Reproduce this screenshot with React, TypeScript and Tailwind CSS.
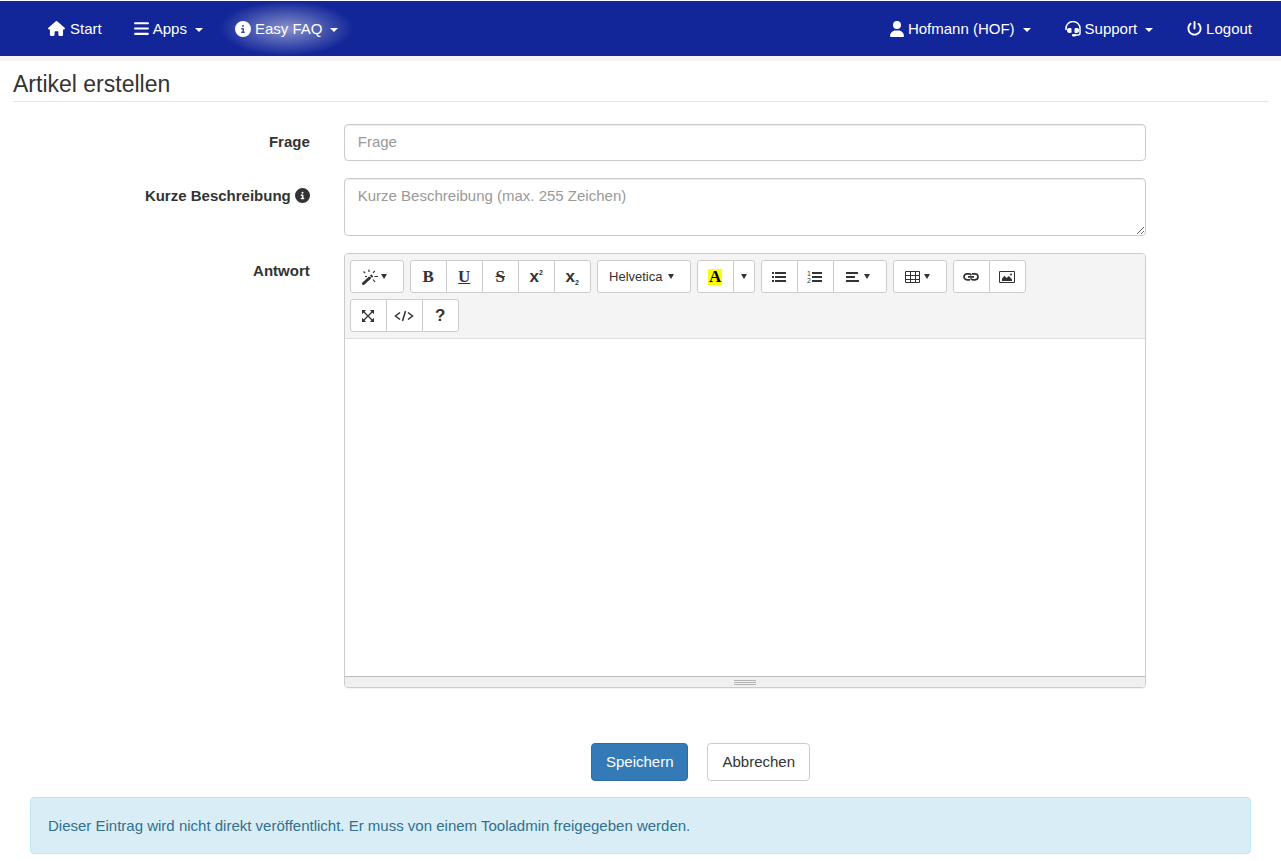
import React from 'react';
import type { ReactNode } from 'react';
import clsx from 'clsx';
import { FaBars, FaCircleInfo, FaHouse, FaPowerOff, FaUser } from 'react-icons/fa6';

const navItem = 'flex h-full items-center text-white';

const NavCaret = () => (
  <svg className="ml-2 mt-[2px] h-1 w-2" viewBox="0 0 8 4" fill="currentColor" aria-hidden="true">
    <path d="M0 0h8L4 4z" />
  </svg>
);

const ToolCaret = () => (
  <svg className="h-[5px] w-[6px]" viewBox="0 0 6 5" fill="currentColor" aria-hidden="true">
    <path d="M0 0h6L3 5z" />
  </svg>
);

const Icon = ({ children }: { children: ReactNode }) => (
  <svg className="h-4 w-4 shrink-0" viewBox="0 0 16 16" fill="none" stroke="currentColor" aria-hidden="true">
    {children}
  </svg>
);

const SupportIcon = () => (
  <svg className="mr-1 h-4 w-4 shrink-0" viewBox="0 0 16 16" fill="none" stroke="currentColor" aria-hidden="true">
    <path d="M1 9V7.500a7 7 0 0 1 14 0V12a2 2 0 0 1-2 2H9.500" strokeWidth="1.500" />
    <path d="M4 7h1.500a1 1 0 0 1 1 1v3a1 1 0 0 1-1 1H5a2.500 2.500 0 0 1-1-5zM12 7h-1.500a1 1 0 0 0-1 1v3a1 1 0 0 0 1 1h.5a2.500 2.500 0 0 0 1-5z" fill="currentColor" stroke="none" />
    <rect x="7" y="13" width="4" height="2.500" rx="1.200" fill="currentColor" stroke="none" />
  </svg>
);

const MagicIcon = () => (
  <Icon>
    <path d="M1.500 14.500 7.500 9" strokeWidth="3" strokeLinecap="round" />
    <path d="M9 7.600 10.300 6.400" strokeWidth="3" />
    <path d="M1.500 2.500 3.200 4.200M7 .5v2.500M12.800 2 11 3.800M12.500 7.500h3.500M11 10.500l2 2.500M3 7.500h2" strokeWidth="1.200" />
  </Icon>
);

const BulletListIcon = () => (
  <Icon>
    <path d="M1 4h2M1 8h2M1 12h2" strokeWidth="2" />
    <path d="M4 4h11M4 8h11M4 12h11" strokeWidth="2" />
  </Icon>
);

const NumberListIcon = () => (
  <Icon>
    <path d="M5 4h10M5 8h10M5 12h10" strokeWidth="2" />
    <g fill="currentColor" stroke="none" fontSize="7" fontFamily="Liberation Sans, sans-serif">
      <text x="0" y="7">1</text>
      <text x="0" y="14">2</text>
    </g>
  </Icon>
);

const AlignIcon = () => (
  <Icon>
    <path d="M1 4h12M1 8h9M1 12h13" strokeWidth="2" />
  </Icon>
);

const TableIcon = () => (
  <Icon>
    <path d="M.5 2.500h14v11H.5zM.5 6.500h14M.5 10.500h14M5.500 2.500v11M10.500 2.500v11" />
  </Icon>
);

const LinkIcon = () => (
  <Icon>
    <path
      d="M7 10.800H4a3 3 0 0 1 0-6h2c1.300 0 2 .6 2.200 1.500M9 4.800h3a3 3 0 0 1 0 6h-2c-1.300 0-2-.6-2.200-1.500M5 7.800h6"
      strokeWidth="1.700"
    />
  </Icon>
);

const PictureIcon = () => (
  <Icon>
    <path d="M.5 2.500h15v11H.5z" />
    <path d="M3 12V9.500l2.500-2.800 2 2.300L10 7l3 3.500V12z" fill="currentColor" stroke="none" />
    <circle cx="12" cy="5.500" r="1" fill="currentColor" stroke="none" />
  </Icon>
);

const FullscreenIcon = () => (
  <Icon>
    <path d="M3.500 3.500l9 9M12.500 3.500l-9 9" strokeWidth="1.300" />
    <path d="M2 2h4.200L2 6.200zM14 2H9.800L14 6.200zM2 14h4.200L2 9.800zM14 14H9.800L14 9.800z" fill="currentColor" stroke="none" />
  </Icon>
);

const CodeIcon = () => (
  <svg className="h-4 w-5" viewBox="0 0 20 16" fill="none" stroke="currentColor" strokeWidth="1.500" aria-hidden="true">
    <path d="M6 4.500 1.500 8 6 11.500M14 4.500 18.500 8 14 11.500M11.500 3l-3 10" />
  </svg>
);

interface ToolButtonProps {
  label: string;
  className?: string;
  children: ReactNode;
}

const ToolButton = ({ label, className = 'w-[37px]', children }: ToolButtonProps) => (
  <button
    type="button"
    aria-label={label}
    className={clsx(
      'flex h-[33px] items-center justify-center border border-[#ccc] bg-white text-[#333] -ml-px first:ml-0 first:rounded-l-[3px] last:rounded-r-[3px] hover:bg-gray-100',
      className,
    )}
  >
    {children}
  </button>
);

const ToolGroup = ({ children }: { children: ReactNode }) => <div className="flex">{children}</div>;

const Navbar = () => (
  <nav className="mt-px flex h-[60px] justify-between border-b-[5px] border-[#f4f4f4] bg-[#122599] px-[29px]">
    <div className="flex pl-[3px]">
      <a href="#start" className={clsx(navItem, 'px-4')}>
        <FaHouse className="mr-[5px] h-[15px] w-[17px]" />
        Start
      </a>
      <button type="button" className={clsx(navItem, 'px-4')}>
        <FaBars className="mr-1 h-[17px] w-[15px]" />
        Apps
        <NavCaret />
      </button>
      <button
        type="button"
        className={clsx(
          navItem,
          'bg-[radial-gradient(closest-side,rgba(255,255,255,0.5),rgba(255,255,255,0.25)_50%,transparent)] px-4',
        )}
      >
        <FaCircleInfo className="mr-1 h-4 w-4" />
        Easy FAQ
        <NavCaret />
      </button>
    </div>
    <div className="flex gap-[34px]">
      <button type="button" className={navItem}>
        <FaUser className="mr-1 h-4 w-[14px]" />
        Hofmann (HOF)
        <NavCaret />
      </button>
      <button type="button" className={navItem}>
        <SupportIcon />
        Support
        <NavCaret />
      </button>
      <a href="#logout" className={navItem}>
        <FaPowerOff className="mr-1 h-[15px] w-[15px]" />
        Logout
      </a>
    </div>
  </nav>
);

const Toolbar = () => (
  <div className="flex flex-wrap gap-[6px] rounded-t-[3px] border-b border-[#ddd] bg-[#f4f4f4] py-[6px] pr-3 pl-[5px]">
    <ToolGroup>
      <ToolButton label="Stil" className="w-[54px] gap-[3px] pr-1">
        <MagicIcon />
        <ToolCaret />
      </ToolButton>
    </ToolGroup>
    <ToolGroup>
      <ToolButton label="Fett">
        <span className="font-['Liberation_Serif',serif] text-[17px] font-bold">B</span>
      </ToolButton>
      <ToolButton label="Unterstrichen">
        <span className="font-['Liberation_Serif',serif] text-[17px] font-bold underline">U</span>
      </ToolButton>
      <ToolButton label="Durchgestrichen">
        <span className="font-['Liberation_Serif',serif] text-[17px] font-bold line-through">S</span>
      </ToolButton>
      <ToolButton label="Hochgestellt">
        <span className="text-[17px] font-bold">x</span>
        <span className="mb-2 text-[7px] font-bold">2</span>
      </ToolButton>
      <ToolButton label="Tiefgestellt">
        <span className="text-[17px] font-bold">x</span>
        <span className="mt-3 text-[7px] font-bold">2</span>
      </ToolButton>
    </ToolGroup>
    <ToolGroup>
      <ToolButton label="Schriftart" className="w-[94px] gap-[6px] pr-1 text-[13px]">
        Helvetica
        <ToolCaret />
      </ToolButton>
    </ToolGroup>
    <ToolGroup>
      <ToolButton label="Textfarbe">
        <span className="w-[14px] bg-[#ff0] font-['Liberation_Serif',serif] text-[17px] leading-4 font-bold text-black">A</span>
      </ToolButton>
      <ToolButton label="Weitere Farben" className="w-[22px]">
        <ToolCaret />
      </ToolButton>
    </ToolGroup>
    <ToolGroup>
      <ToolButton label="Liste">
        <BulletListIcon />
      </ToolButton>
      <ToolButton label="Nummerierte Liste">
        <NumberListIcon />
      </ToolButton>
      <ToolButton label="Absatz" className="w-[54px] gap-[3px] pr-1">
        <AlignIcon />
        <ToolCaret />
      </ToolButton>
    </ToolGroup>
    <ToolGroup>
      <ToolButton label="Tabelle" className="w-[54px] gap-[3px] pr-1">
        <TableIcon />
        <ToolCaret />
      </ToolButton>
    </ToolGroup>
    <ToolGroup>
      <ToolButton label="Link">
        <LinkIcon />
      </ToolButton>
      <ToolButton label="Bild">
        <PictureIcon />
      </ToolButton>
    </ToolGroup>
    <ToolGroup>
      <ToolButton label="Vollbild">
        <FullscreenIcon />
      </ToolButton>
      <ToolButton label="Quellcode">
        <CodeIcon />
      </ToolButton>
      <ToolButton label="Hilfe">
        <span className="text-[17px] font-bold">?</span>
      </ToolButton>
    </ToolGroup>
  </div>
);

interface FormRowProps {
  id: string;
  label: ReactNode;
  children: ReactNode;
}

const FormRow = ({ id, label, children }: FormRowProps) => (
  <div className="grid grid-cols-12">
    <label htmlFor={id} className="col-span-3 flex items-start justify-end px-[17px] pt-[7px] font-bold">
      {label}
    </label>
    <div className="col-span-8 px-[17px]">{children}</div>
  </div>
);

const field =
  'block w-full rounded-[4px] border border-[#ccc] bg-white px-[13px] shadow-[inset_0_1px_1px_rgba(0,0,0,0.075)] placeholder:text-[#999]';

export default function App() {
  return (
    <div className="bg-white font-['Liberation_Sans',Arial,sans-serif] text-[15px] leading-[21px] text-[#333]">
      <Navbar />
      <main className="px-[13px] pt-2">
        <h1 className="mb-[22px] border-b border-[#e5e5e5] pb-[2px] text-[23px] leading-[30px]">Artikel erstellen</h1>

        <form>
          <div className="flex flex-col gap-[17px]">
            <FormRow id="frage" label="Frage">
              <input id="frage" type="text" placeholder="Frage" className={clsx(field, 'h-[37px] pb-[2px]')} />
            </FormRow>
            <FormRow
              id="beschreibung"
              label={
                <>
                  Kurze Beschreibung
                  <FaCircleInfo className="mt-[3px] ml-1 h-[15px] w-[15px]" />
                </>
              }
            >
              <textarea
                id="beschreibung"
                placeholder="Kurze Beschreibung (max. 255 Zeichen)"
                className={clsx(field, 'h-[58px] resize-y py-[6px]')}
              />
            </FormRow>
            <FormRow id="antwort" label="Antwort">
              <div className="rounded-[4px] border border-[#ccc] shadow-[0_1px_1px_rgba(0,0,0,0.05)]">
                <Toolbar />
                <textarea id="antwort" className="block h-[337px] w-full resize-none bg-white p-[10px]" />
                <div className="flex h-[11px] flex-col items-center gap-px rounded-b-[3px] border-t border-[#bbb] bg-[#f0f0f0] pt-[3px]">
                  <div className="h-px w-[22px] bg-[#b5b5b5]" />
                  <div className="h-px w-[22px] bg-[#b5b5b5]" />
                  <div className="h-px w-[22px] bg-[#b5b5b5]" />
                </div>
              </div>
            </FormRow>
          </div>

          <div className="mt-[55px] flex justify-center gap-[19px] pl-[120px]">
            <button
              type="submit"
              className="h-[38px] rounded-[4px] border border-[#2e6da4] bg-[#337ab7] px-[14px] pb-[2px] text-white hover:bg-[#286090]"
            >
              Speichern
            </button>
            <button
              type="button"
              className="h-[38px] rounded-[4px] border border-[#ccc] bg-white px-[14px] pb-[2px] hover:bg-gray-100"
            >
              Abbrechen
            </button>
          </div>
        </form>

        <div className="mx-[17px] mt-4 mb-[7px] rounded-[4px] border border-[#bce8f1] bg-[#d9edf7] px-[17px] py-[17px] text-[#31708f]">
          Dieser Eintrag wird nicht direkt veröffentlicht. Er muss von einem Tooladmin freigegeben werden.
        </div>
      </main>
    </div>
  );
}
